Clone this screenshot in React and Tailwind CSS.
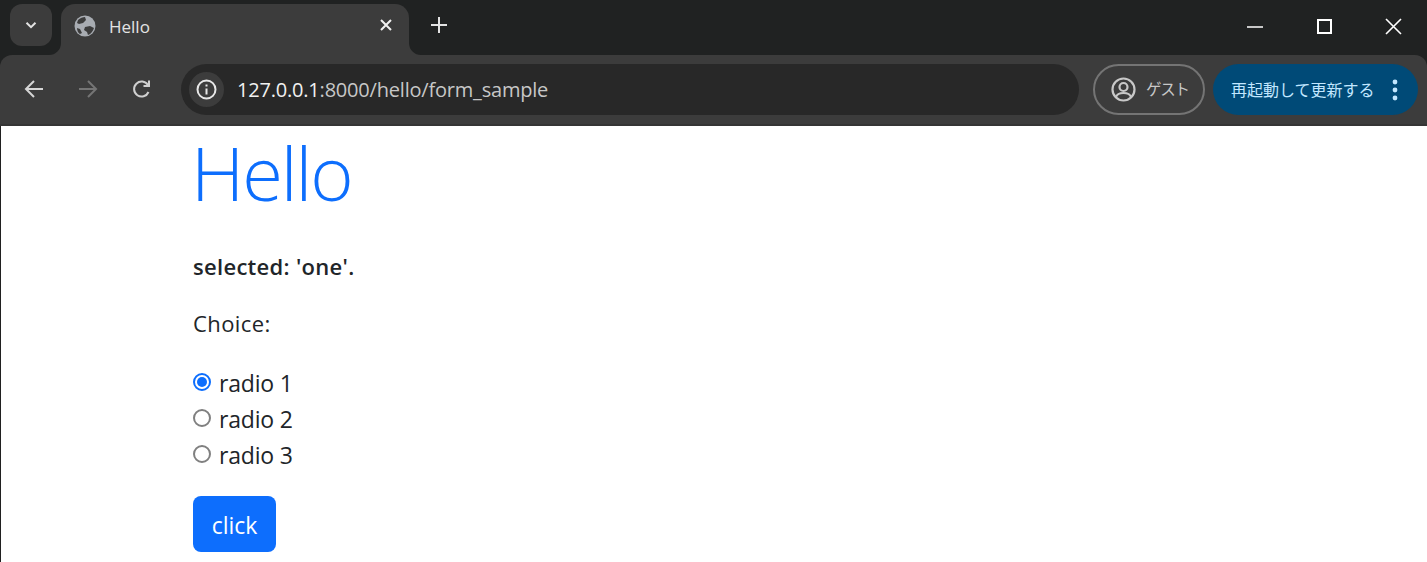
import React from "react";

const sans = '"Open Sans","Noto Sans CJK JP",sans-serif';

function Radio({ checked, label }) {
  return (
    <label className="flex h-9 items-center">
      <span className={`box-border flex h-[18px] w-[18px] -translate-y-px items-center justify-center rounded-full border-2 bg-white ${checked ? "border-[#0d6efd]" : "border-[#808080]"}`}>
        {checked && <span className="h-[10px] w-[10px] rounded-full bg-[#0d6efd]" />}
      </span>
      <span className="ml-2 text-[23px] tracking-[-0.2px] text-[#212529]">{label}</span>
    </label>
  );
}

export default function App() {
  return (
    <div className="h-[562px] w-[1427px] overflow-hidden bg-white" style={{ fontFamily: sans }}>
      {/* tab strip */}
      <div className="flex h-[55px] items-start bg-[#202222] pl-[10px] pt-1">
        <div className="flex h-[42px] w-[42px] items-center justify-center rounded-xl bg-[#3c3c3c]">
          <svg width="14" height="14" viewBox="0 0 14 14" fill="none" stroke="#e3e3e3" strokeWidth="2"><path d="M2.5 4.8 7 9.2l4.5-4.4" /></svg>
        </div>
        <div className="relative ml-[9px] flex h-[51px] w-[348px] items-start rounded-t-[14px] bg-[#3c3c3c] pl-[13px] pr-4 pt-[11px]">
          <svg className="absolute bottom-0 left-[-12px]" width="12" height="12" viewBox="0 0 12 12" fill="#3c3c3c"><path d="M12 0A12 12 0 0 1 0 12H12Z" /></svg>
          <svg className="absolute bottom-0 right-[-12px]" width="12" height="12" viewBox="0 0 12 12" fill="#3c3c3c"><path d="M0 0A12 12 0 0 0 12 12H0Z" /></svg>
          <svg width="22" height="22" viewBox="0 0 22 22">
            <circle cx="11" cy="11" r="10.5" fill="#a8acb2" />
            <path d="M4 5c2-2 5-3 7-3l1 3-3 3-4 1-2-1zM11 12l5-1 4 2c-1 3-3 6-6 7l-1-3-3-2zM3 13l3 1 2 4-2 1c-2-1-3-4-3-6z" fill="#3c3c3c" />
          </svg>
          <span className="ml-[13px] mt-[1px] text-[17px] leading-[22px] text-[#e3e3e3]">Hello</span>
          <svg className="ml-auto mt-[3px]" width="14" height="14" viewBox="0 0 14 14" stroke="#f0f0f0" strokeWidth="2"><path d="M2 2l10 10M12 2 2 12" /></svg>
        </div>
        <svg className="ml-[22px] mt-[13px]" width="16" height="16" viewBox="0 0 16 16" stroke="#e3e3e3" strokeWidth="2"><path d="M8 0v16M0 8h16" /></svg>
        <div className="ml-auto flex items-center pt-[14px]">
          <svg width="16" height="16" viewBox="0 0 16 16" stroke="#fff" strokeWidth="1.5"><path d="M0 8h16" /></svg>
          <svg className="ml-[54px]" width="15" height="15" viewBox="0 0 15 15" fill="none" stroke="#fff" strokeWidth="2"><rect x="1" y="1" width="13" height="13" /></svg>
          <svg className="ml-[53px] mr-[25px]" width="17" height="17" viewBox="0 0 17 17" stroke="#fff" strokeWidth="1.6"><path d="M1 1l15 15M16 1 1 16" /></svg>
        </div>
      </div>

      {/* toolbar */}
      <div className="h-[71px] bg-[#202222]">
        <div className="flex h-[71px] items-start rounded-t-xl border-b-2 border-[#353535] bg-[#3c3c3c] pl-[24px] pt-[9px]">
          <svg className="mt-[15px]" width="20" height="20" viewBox="0 0 20 20" fill="none" stroke="#d6d6d6" strokeWidth="2"><path d="M19 10H2M10 2l-8 8 8 8" /></svg>
          <svg className="ml-[34px] mt-[15px]" width="20" height="20" viewBox="0 0 20 20" fill="none" stroke="#757575" strokeWidth="2"><path d="M1 10h17M10 2l8 8-8 8" /></svg>
          <svg className="ml-[34px] mt-[15px]" width="20" height="20" viewBox="0 0 20 20" fill="none" stroke="#d0d0d0" strokeWidth="2"><path d="M16.5 13a7.5 7.5 0 1 1-.6-7M17 1.5V7h-5.5" /></svg>
          <div className="ml-[29px] flex h-[51px] w-[898px] items-center rounded-full bg-[#282828] pl-2">
            <div className="flex h-[35px] w-[35px] items-center justify-center rounded-full bg-[#3c3c3c]">
              <svg width="21" height="21" viewBox="0 0 21 21" fill="none" stroke="#e8e8e8" strokeWidth="2"><circle cx="10.5" cy="10.5" r="9" /><path d="M10.5 9.5v6M10.5 5.5v2" /></svg>
            </div>
            <span className="ml-[13px] text-[20px] tracking-[-0.2px] text-[#c7c7c7]"><span className="text-[#f1f1f1]">127.0.0.1</span>:8000/hello/form_sample</span>
          </div>
          <div className="ml-[14px] box-border flex h-[51px] w-[112px] items-center rounded-full border-2 border-[#747474] pl-[16px]">
            <svg width="25" height="25" viewBox="0 0 25 25" fill="none" stroke="#c8c8c8" strokeWidth="2.2"><circle cx="12.5" cy="12.5" r="11" /><circle cx="12.5" cy="10" r="4" /><path d="M5 20c1-3 4-4 7.5-4s6.5 1 7.5 4" /></svg>
            <span className="ml-[10px] text-[15.5px] tracking-[-1.2px] text-[#c7c7c7]">ゲスト</span>
          </div>
          <div className="ml-2 flex h-[51px] w-[205px] items-center rounded-full bg-[#004a77] pl-[18px]">
            <span className="whitespace-nowrap text-[16px] text-[#c2e7ff]">再起動して更新する</span>
            <svg className="ml-[17px]" width="6" height="22" viewBox="0 0 6 22" fill="#c2e7ff"><circle cx="3" cy="3" r="2.4" /><circle cx="3" cy="11" r="2.4" /><circle cx="3" cy="19" r="2.4" /></svg>
          </div>
        </div>
      </div>

      {/* page */}
      <main className="h-[436px] border-l border-[#202020] pl-[190px]">
        <h1 className="pt-[2px] text-[74px] font-light leading-[90px] tracking-[-2px] text-[#0d6efd]">Hello</h1>
        <div className="pl-[2px]">
          <p className="mt-[31px] text-[22px] font-semibold leading-[34px] tracking-[0.3px] text-[#212529]">selected: 'one'.</p>
          <p className="mt-[23px] text-[22px] leading-[34px] tracking-[0.4px] text-[#212529]">Choice:</p>
          <div className="mt-[25px] flex flex-col">
            <Radio checked label="radio 1" />
            <Radio label="radio 2" />
            <Radio label="radio 3" />
          </div>
          <button className="mt-[23px] h-[56px] w-[83px] rounded-lg bg-[#0d6efd] pt-[2px] text-[23px] text-white">click</button>
        </div>
      </main>
    </div>
  );
}
